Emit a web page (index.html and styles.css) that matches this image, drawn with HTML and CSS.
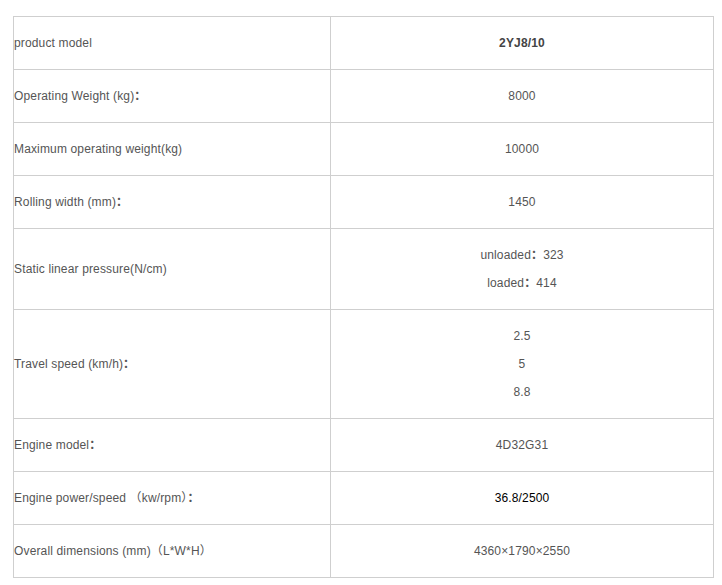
FILE: index.html
```html
<!DOCTYPE html>
<html>
<head>
<meta charset="utf-8">
<link rel="stylesheet" href="styles.css">
</head>
<body>
<table class="spec">
  <colgroup><col class="c1"><col class="c2"></colgroup>
  <tr><td class="k">product model</td><td class="v"><b>2YJ8/10</b></td></tr>
  <tr><td class="k">Operating Weight (kg)<span class="cc">：</span></td><td class="v">8000</td></tr>
  <tr><td class="k">Maximum operating weight(kg)</td><td class="v">10000</td></tr>
  <tr><td class="k">Rolling width (mm)<span class="cc">：</span></td><td class="v">1450</td></tr>
  <tr><td class="k">Static linear pressure(N/cm)</td><td class="v"><div>unloaded<span class="cc">：</span>323</div><div>loaded<span class="cc">：</span>414</div></td></tr>
  <tr><td class="k">Travel speed (km/h)<span class="cc">：</span></td><td class="v"><div>2.5</div><div>5</div><div>8.8</div></td></tr>
  <tr><td class="k">Engine model<span class="cc">：</span></td><td class="v">4D32G31</td></tr>
  <tr><td class="k">Engine power/speed <span class="cp">（</span>kw/rpm<span class="cp">）</span><span class="cc">：</span></td><td class="v dark">36.8/2500</td></tr>
  <tr><td class="k">Overall dimensions (mm)<span class="cp">（</span>L*W*H<span class="cp">）</span></td><td class="v">4360×1790×2550</td></tr>
</table>
</body>
</html>
```
FILE: styles.css
```css
html, body {
  margin: 0;
  background: #fff;
}
body {
  padding: 16px 0 0 13px;
  font-family: "Liberation Sans", Arial, "Noto Sans CJK SC", sans-serif;
  font-size: 12px;
  color: #555;
  letter-spacing: 0.15px;
}
.spec {
  border-collapse: collapse;
  width: 700px;
  table-layout: fixed;
}
.c1 { width: 317px; }
.c2 { width: 383px; }
.spec td {
  border: 1px solid #cfcfcf;
  padding: 12px 0;
  line-height: 28px;
  height: 28px;
  vertical-align: middle;
}
.k { text-align: left; }
.v { text-align: center; }
.v b { color: #444; }
.dark { color: #000; }
.cc {
  font-family: "Noto Sans CJK SC", sans-serif;
  font-weight: bold;
  font-size: 12px;
  line-height: 0;
}
.cp {
  font-family: "Noto Sans CJK SC", sans-serif;
  font-size: 12px;
  line-height: 0;
}
```
